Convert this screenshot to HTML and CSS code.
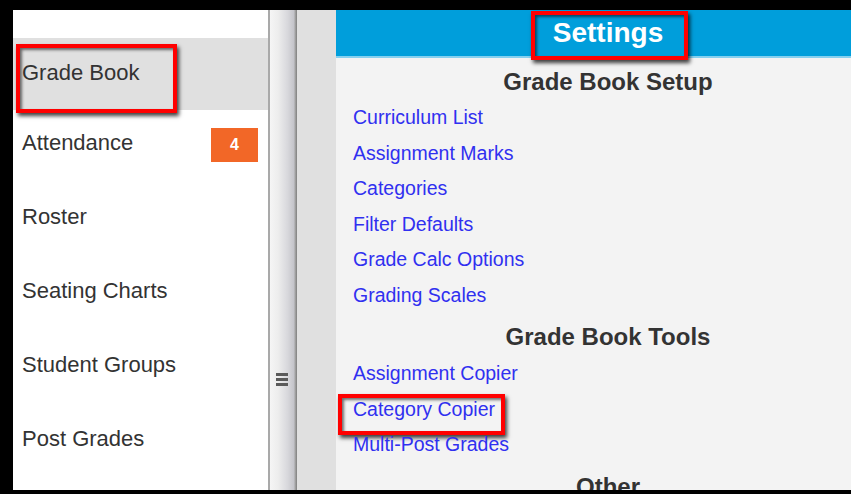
FILE: index.html
```html
<!DOCTYPE html>
<html lang="en">
<head>
<meta charset="utf-8">
<title>Grade Book Settings</title>
<link rel="stylesheet" href="styles.css">
</head>
<body>
<div class="frame">
  <nav class="sidebar">
    <div class="nav-item first selected">
      <span class="nav-label">Grade Book</span>
      <span class="callout callout-nav"></span>
    </div>
    <div class="nav-item">
      <span class="nav-label">Attendance</span>
      <span class="badge">4</span>
    </div>
    <div class="nav-item"><span class="nav-label">Roster</span></div>
    <div class="nav-item"><span class="nav-label">Seating Charts</span></div>
    <div class="nav-item"><span class="nav-label">Student Groups</span></div>
    <div class="nav-item"><span class="nav-label">Post Grades</span></div>
  </nav>
  <div class="splitter">
    <span class="grip"><i></i><i></i><i></i></span>
  </div>
  <div class="gutter"></div>
  <main class="main">
    <header class="header">
      <h1 class="title">Settings</h1>
      <span class="callout callout-title"></span>
    </header>
    <section class="group">
      <h2 class="group-title">Grade Book Setup</h2>
      <a class="link" href="#">Curriculum List</a>
      <a class="link" href="#">Assignment Marks</a>
      <a class="link" href="#">Categories</a>
      <a class="link" href="#">Filter Defaults</a>
      <a class="link" href="#">Grade Calc Options</a>
      <a class="link" href="#">Grading Scales</a>
    </section>
    <section class="group">
      <h2 class="group-title tools">Grade Book Tools</h2>
      <a class="link" href="#">Assignment Copier</a>
      <a class="link marked" href="#">Category Copier<span class="callout callout-link"></span></a>
      <a class="link" href="#">Multi-Post Grades</a>
    </section>
    <section class="group">
      <h2 class="group-title tools">Other</h2>
    </section>
  </main>
</div>
</body>
</html>
```

FILE: styles.css
```css
html, body {
  margin: 0;
  padding: 0;
  background: #000;
  overflow: hidden;
}

.frame {
  box-sizing: border-box;
  width: 851px;
  height: 494px;
  padding: 10px 0 4px 13px;
  display: flex;
  overflow: hidden;
  font-family: "Liberation Sans", Arial, sans-serif;
}

/* left navigation */
.sidebar {
  flex: 0 0 255px;
  background: #fff;
  border-right: 2px solid #a9a9a9;
  padding-top: 28px;
  display: flex;
  flex-direction: column;
}

.nav-item {
  position: relative;
  flex-shrink: 0;
  box-sizing: border-box;
  height: 74px;
  padding: 21px 10px 0 9px;
  display: flex;
  align-items: flex-start;
  justify-content: space-between;
  font-size: 22px;
  line-height: 24px;
  color: #333;
}

.nav-item.first {
  height: 72px;
  padding-top: 23px;
}

.nav-item.selected {
  background: #e0e0e0;
}

.badge {
  margin-top: -3px;
  width: 47px;
  height: 34px;
  background: #f26727;
  color: #fff;
  font-size: 16px;
  font-weight: bold;
  line-height: 34px;
  text-align: center;
}

/* drag handle between panes */
.splitter {
  flex: 0 0 27px;
  background: linear-gradient(to right, #f5f5f5 0%, #ededed 30%, #d8d8dc 65%, #c4c4ca 88%, #a0a0a0 94%, #7e7e7e 100%);
  display: flex;
  align-items: flex-start;
  justify-content: center;
}

.grip {
  display: flex;
  flex-direction: column;
  gap: 2px;
  margin: 363px 4px 0 0;
}

.grip i {
  display: block;
  width: 12px;
  height: 3px;
  background: #5a5a5a;
  filter: blur(0.4px);
}

.gutter {
  flex: 0 0 39px;
  background: #e0e0e0;
}

/* settings pane */
.main {
  flex: 0 0 544px;
  background: #f3f3f3;
  display: flex;
  flex-direction: column;
  overflow: hidden;
}

.main > * {
  flex-shrink: 0;
}

.header {
  position: relative;
  height: 46px;
  background: #009edb;
  border-bottom: 2px solid #86d0ef;
  display: flex;
  align-items: center;
  justify-content: center;
}

.title {
  margin: 0;
  color: #fff;
  font-size: 28px;
  font-weight: bold;
  line-height: 32px;
  padding-bottom: 1px;
}

.group {
  display: flex;
  flex-direction: column;
}

.group-title {
  margin: 6px 0 0;
  text-align: center;
  font-size: 24px;
  font-weight: bold;
  line-height: 36px;
  color: #333;
}

.group-title.tools {
  margin-top: 5px;
  line-height: 38px;
}

.link {
  position: relative;
  flex-shrink: 0;
  align-self: flex-start;
  margin-left: 17px;
  height: 35.5px;
  line-height: 35.5px;
  font-size: 19.5px;
  color: #3030f0;
  text-decoration: none;
}

/* red annotation boxes */
.callout {
  position: absolute;
  box-sizing: border-box;
  border: 4px solid #ff0000;
  box-shadow: 2px 3px 4px rgba(0, 0, 0, 0.75), inset 2px 2px 3px rgba(0, 0, 0, 0.55);
  pointer-events: none;
}

.callout-nav {
  left: 3px;
  top: 6px;
  width: 161px;
  height: 69px;
}

.callout-title {
  left: 195px;
  top: 1px;
  width: 157px;
  height: 49px;
}

.callout-link {
  left: -15px;
  top: 2px;
  width: 167px;
  height: 41px;
}
```
